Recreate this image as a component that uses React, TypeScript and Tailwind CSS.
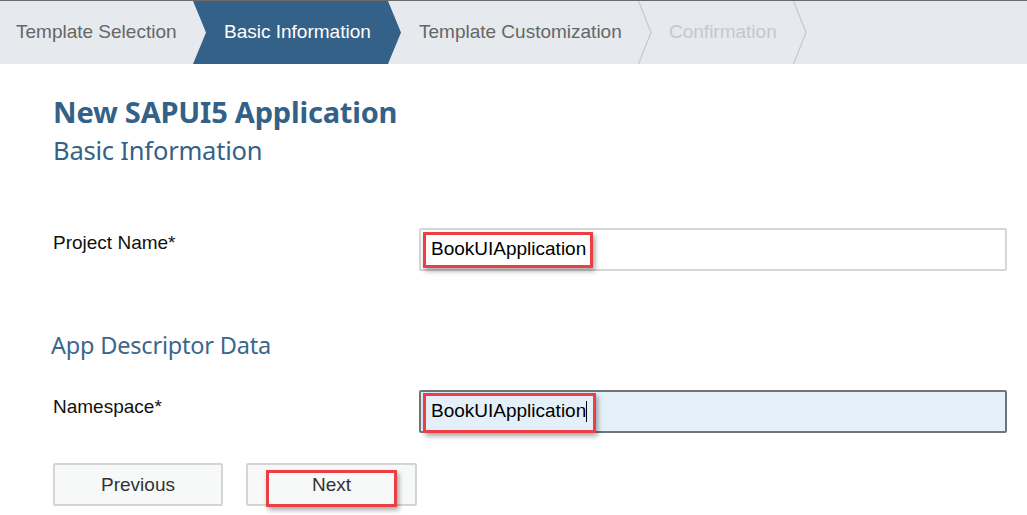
import React from 'react';

const steps = [
  { label: 'Template Selection', width: 'w-[193px]', pad: 'pl-[16px]', tone: 'text-[#666666]' },
  { label: 'Basic Information', width: 'w-[208px]', pad: 'pl-[31px]', tone: 'text-white', active: true },
  { label: 'Template Customization', width: 'w-[251px]', pad: 'pl-[18px]', tone: 'text-[#666666]' },
  { label: 'Confirmation', width: 'w-[155px]', pad: 'pl-[17px]', tone: 'text-[#c4c8cc]' },
];

function Chevron() {
  return (
    <svg className="absolute right-0 top-0 h-[63px] w-[14px]" viewBox="0 0 14 63">
      <polyline points="0.5,0 13,31.5 0.5,63" fill="none" stroke="#c3c9cf" strokeWidth="1.2" />
    </svg>
  );
}

function Wizard() {
  return (
    <div className="border-t border-[#6b6b6b] bg-[#e6eaee] h-[64px] flex font-['Liberation_Sans',Arial,sans-serif] text-[19px]">
      {steps.map((s, i) => (
        <div
          key={s.label}
          className={`relative h-[63px] flex items-center shrink-0 ${s.width} ${s.pad} ${s.tone} ${
            s.active ? 'bg-[#346187] [clip-path:polygon(0_0,195px_0,208px_50%,195px_100%,0_100%,13px_50%)]' : ''
          }`}
        >
          <span className="whitespace-nowrap">{s.label}</span>
          {i >= 2 && <Chevron />}
        </div>
      ))}
    </div>
  );
}

function Highlight({ className }: { className: string }) {
  return <div className={`absolute border-[3px] border-[#ee3e45] shadow-[2px_3px_5px_rgba(0,0,0,0.35)] ${className}`} />;
}

export default function App() {
  return (
    <div className="w-[1027px] h-[515px] bg-white overflow-hidden">
      <Wizard />

      <div className="pl-[53px] pr-[20px]">
        <h1 className="mt-[31px] text-[29px] leading-[34px] font-bold text-[#346187] font-['Noto_Sans','Open_Sans',sans-serif] tracking-[-0.2px]">
          New SAPUI5 Application
        </h1>
        <h2 className="mt-[5px] text-[25.5px] leading-[32px] text-[#346187] font-['Noto_Sans','Open_Sans',sans-serif] tracking-[-0.2px]">
          Basic Information
        </h2>

        <div className="mt-[62px] grid grid-cols-[366px_588px] items-start font-['Liberation_Sans',Arial,sans-serif]">
          <label className="pt-[1px] text-[19px] text-[#111]">Project Name*</label>
          <div className="relative h-[43px] border-2 border-[#d6d6d6] rounded-[2px] bg-white flex items-center pl-[10px] text-[19px] text-black">
            BookUIApplication
            <Highlight className="left-[2px] top-[2px] w-[170px] h-[36px]" />
          </div>
        </div>

        <h3 className="mt-[59px] -ml-[2px] text-[23.5px] leading-[30px] text-[#3a678c] font-['Noto_Sans','Open_Sans',sans-serif] tracking-[-0.2px]">
          App Descriptor Data
        </h3>

        <div className="mt-[30px] grid grid-cols-[366px_588px] items-start font-['Liberation_Sans',Arial,sans-serif]">
          <label className="pt-[3px] text-[19px] text-[#111]">Namespace*</label>
          <div className="relative h-[43px] border-2 border-[#6f7679] rounded-[2px] bg-[#e4f0f9] flex items-center pl-[10px] text-[19px] text-black">
            BookUIApplication
            <span className="inline-block w-px h-[21px] bg-black" />
            <Highlight className="left-[2px] top-[1px] w-[173px] h-[40px]" />
          </div>
        </div>

        <div className="mt-[30px] flex gap-[23px] font-['Liberation_Sans',Arial,sans-serif] text-[19px] text-[#333]">
          <button className="w-[170px] h-[43px] border-2 border-[#d4d4d4] rounded-[2px] bg-[#f7f8f8] pt-[2px]">Previous</button>
          <button className="relative w-[171px] h-[43px] border-2 border-[#d4d4d4] rounded-[2px] bg-[#f7f8f8] pt-[2px]">
            Next
            <Highlight className="left-[18px] top-[5px] w-[131px] h-[37px]" />
          </button>
        </div>
      </div>
    </div>
  );
}
